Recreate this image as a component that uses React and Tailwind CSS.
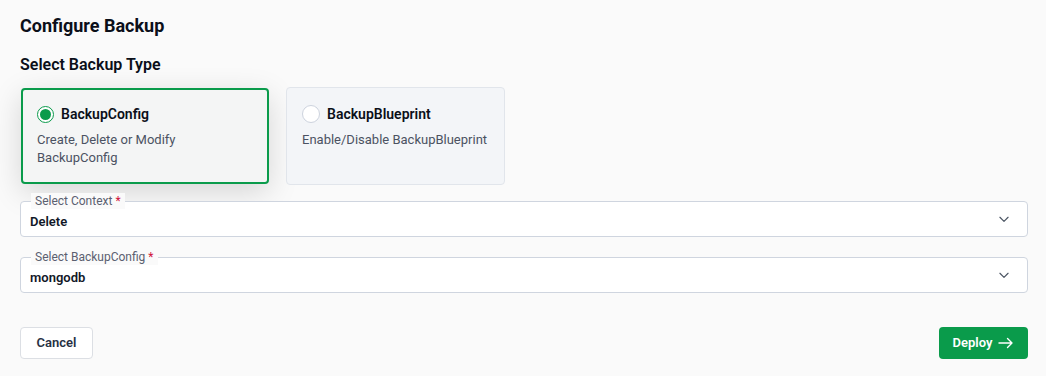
import React from "react";

function Chevron() {
  return (
    <svg width="14" height="14" viewBox="0 0 24 24" fill="none" stroke="#4b5563" strokeWidth="2" strokeLinecap="round" strokeLinejoin="round">
      <path d="M5 9l7 7 7-7" />
    </svg>
  );
}

function SelectField({ label, value }) {
  return (
    <div className="relative h-[36px] rounded-[4px] border border-[#cfd5df] bg-white flex items-center justify-between pl-[9px] pr-[16px]">
      <div className="absolute left-[10px] top-[-9px] bg-[#fafafa] px-[4px] text-[12px] leading-[16px] text-[#5b6070]">
        {label} <span className="text-[#d0103a]">*</span>
      </div>
      <span className="text-[13px] font-semibold text-[#111827] mt-[6px]">{value}</span>
      <Chevron />
    </div>
  );
}

export default function App() {
  return (
    <div className="w-[1046px] h-[376px] bg-[#fafafa] pl-[20px] pr-[18px] pt-[14px]" style={{ fontFamily: "Roboto, 'Noto Sans', sans-serif" }}>
      <h1 className="text-[18px] leading-[24px] font-bold text-[#0b0f19]">Configure Backup</h1>
      <h2 className="mt-[17px] text-[16px] leading-[20px] font-semibold text-[#0b0f19]">Select Backup Type</h2>
      <div className="mt-[12px] flex gap-[17px] items-start">
        <div className="ml-[1px] mt-[1px] w-[248px] h-[96px] rounded-[4px] border-2 border-[#0a9b4b] bg-[#f4f5f5] shadow-[0_8px_30px_rgba(0,0,0,0.15)] px-[14px] pt-[14px]">
          <div className="flex items-center gap-[7px]">
            <span className="w-[17px] h-[17px] rounded-full border-[1.5px] border-[#0a9b4b] bg-white flex items-center justify-center">
              <span className="w-[11px] h-[11px] rounded-full bg-[#0a9b4b]" />
            </span>
            <span className="text-[14px] font-semibold text-[#0b0f19] leading-[20px]">BackupConfig</span>
          </div>
          <p className="mt-[7px] text-[13px] leading-[18px] text-[#4b5262]">Create, Delete or Modify<br />BackupConfig</p>
        </div>
        <div className="w-[219px] h-[98px] rounded-[4px] border border-[#e1e5eb] bg-[#f3f5f8] px-[15px] pt-[16px]">
          <div className="flex items-center gap-[7px]">
            <span className="w-[18px] h-[18px] rounded-full border border-[#cdd3de] bg-white" />
            <span className="text-[14px] font-semibold text-[#0b0f19] leading-[20px]">BackupBlueprint</span>
          </div>
          <p className="mt-[7px] text-[13px] leading-[18px] text-[#4b5262] whitespace-nowrap">Enable/Disable BackupBlueprint</p>
        </div>
      </div>
      <div className="mt-[16px] flex flex-col gap-[20px]">
        <SelectField label="Select Context" value="Delete" />
        <SelectField label="Select BackupConfig" value="mongodb" />
      </div>
      <div className="mt-[34px] flex justify-between">
        <button className="h-[32px] w-[73px] rounded-[4px] border border-[#dcdfe4] bg-white text-[13px] font-semibold text-[#273043]">Cancel</button>
        <button className="h-[32px] w-[89px] rounded-[4px] bg-[#0a9b4b] text-[13px] font-semibold text-white flex items-center justify-center gap-[6px]">
          Deploy
          <svg width="16" height="12" viewBox="0 0 16 12" fill="none" stroke="white" strokeWidth="1.4" strokeLinecap="round" strokeLinejoin="round">
            <path d="M1 6h13M9.5 1.5L14 6l-4.5 4.5" />
          </svg>
        </button>
      </div>
    </div>
  );
}
